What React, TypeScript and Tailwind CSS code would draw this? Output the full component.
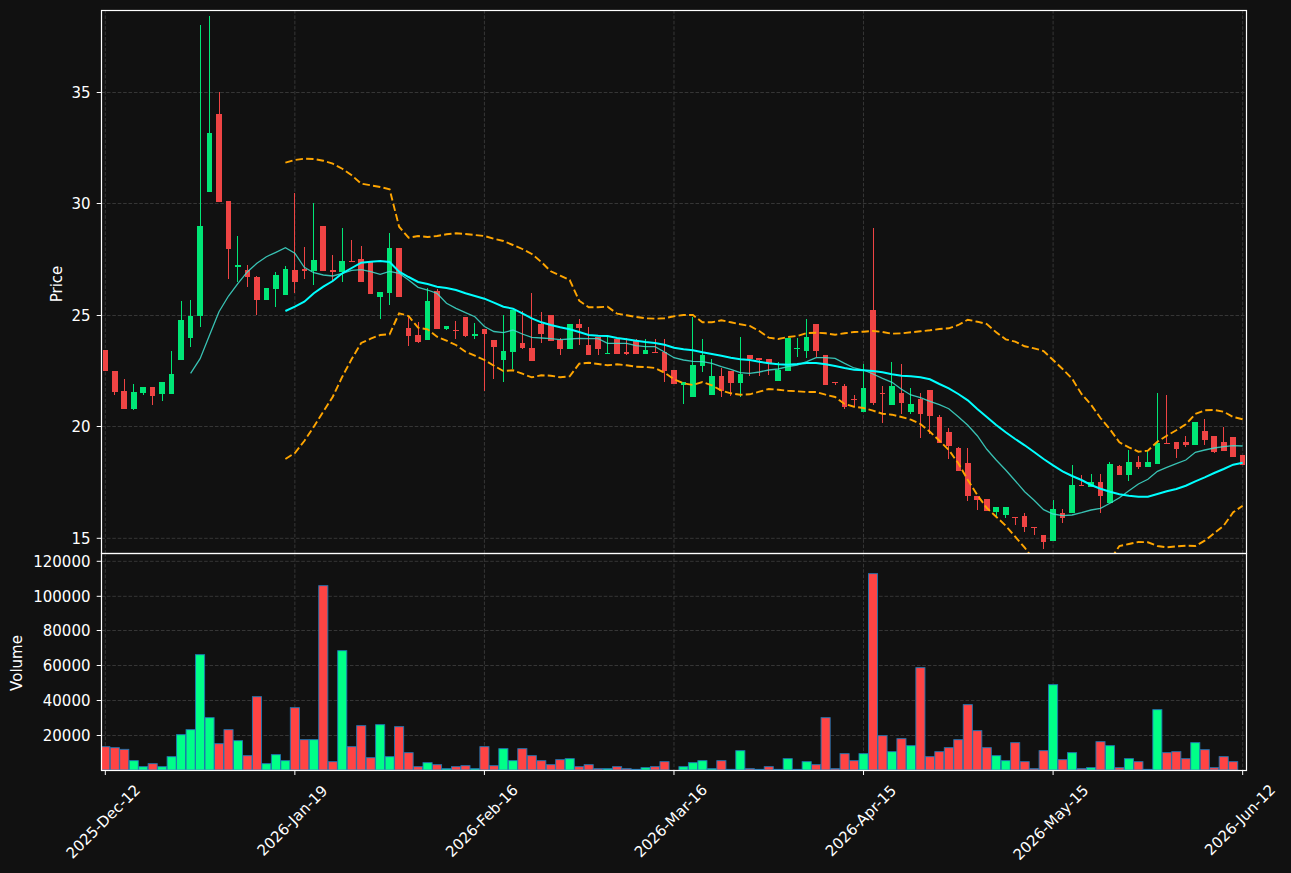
const X = (i: number) => 105.3 + 9.478 * i;

type Candle = [number, number, number, number?, number?];
// [green?, bodyTop, bodyBottom, wickTop, wickBottom] in chart pixels
const candles: Candle[] = [
  [0,350,371],[0,371,392,371,394.7],[0,391,409,379,409],[1,392,409,384.3,409.7],[1,387,393,387,395],
  [0,387,396,387,404.7],[1,382,394,382,400.7],[1,374,394,351,394],[1,320,360,301,360],[1,316,338,300.3,346.7],
  [1,226,316,25,326.7],[1,133,192,16.3,192],[0,114,202,92.3,202],[0,201,249,201,279.3],[1,265,267,236.3,281.7],
  [0,270,277,265.3,286.7],[0,277,300,276,315.3],[1,288,300],[1,275,289,272,307.3],[1,269,295,266.3,295],
  [0,270,282,193.3,293],[0,269,271,247.3,279.3],[1,260,271,203.3,285.3],[0,226,271],[0,270,272,255.3,282],
  [1,261,272,228.3,281.7],[0,261,262,240.3,262],[0,259,282,246.3,282],[0,262,294],[1,292,297,292,319.3],
  [1,248,293,233.3,305.3],[0,248,297],[0,328,336,316,346],[0,335,342,322,343],[1,301,340,288,340],
  [0,291,329,289,329],[1,326,329,326,330],[0,330,331,321.3,339.3],[0,317,336,317,337],[1,334,336,323,339],
  [0,329,334,329,391],[0,340,347,340,379.3],[1,351,360,315.3,381.7],[1,310,352,310,368.7],[0,343,348,310.7,349],
  [0,348,361,293.3,361],[0,324,334,312.3,343],[0,315,341],[0,340,349,337.7,355],[1,324,349],
  [0,324,328,319,345],[0,345,355,327.3,355],[0,337,349,337,355],[1,353,354,337,354],[0,339,354],
  [0,352,354,338,355],[0,341,354,339.3,354],[1,350,354,339,354],[0,352,353,339,353],[0,352,371,339,381.7],
  [0,370,384],[1,382,385,382,403.7],[1,365,397,317.3,397],[1,355,366,339,372],[1,376,395,359,395],
  [0,376,391,368.3,397],[0,371,383,371,396],[1,374,383,337,397],[0,355,359,355,376],[0,358,360,358,376],
  [0,359,363,359,375],[1,370,381,362,381],[1,338,371],[1,348,349,338,357],[1,337,351,319,358],
  [0,324,351,324,357],[0,355,385],[0,382,383,382,385],[0,386,407,384,408.7],[0,399,400,395,407],
  [1,388,412,364.3,412],[0,310,403,228,405],[0,393,394,386.3,423],[1,386,405,362.3,405],[0,393,403,364.3,414],
  [1,404,412,388.3,413.7],[0,399,414,393,437.7],[0,390,416,390,434],[0,417,443,415,443],[0,432,446,428,459],
  [0,448,471,447,471],[0,463,496,448,500.7],[0,496,500,496,509.7],[0,499,511],[1,507,512,507,516],
  [1,507,515,507,518],[0,517,518,517,525],[0,516,527,513,532],[0,527,528,527,535],[0,535,542,535,549],
  [1,509,541,500,541],[0,513,518,509,523],[1,485,513,465,513],[0,485,486,475,486],[1,482,487,474,487],
  [0,482,496,474,513],[1,464,503,462,503],[0,466,475,465,475],[1,462,475,450,481],[0,462,467,456,469],
  [1,462,467,451,467],[1,443,464,393.3,464],[0,443,444,395,444],[0,442,449,442,458],[0,442,445,436,447],
  [1,422,445],[0,431,440,419,445],[0,436,452,436,453],[0,442,451,427,451],[0,437,457],[0,455,465],
];

const volumeZ = [
  590,593,598,632,650,641,650,620,554,539,314,503,581,539,572,617,440,641,614,632,473,569,569,107,635,302,590,527,623,524,
  620,530,608,650,638,644,656,650,647,656,590,647,596,632,596,617,632,644,629,626,650,644,656,656,650,656,658,653,650,635,
  660,650,638,632,656,632,658,602,656,658,650,658,626,658,635,644,503,656,611,632,611,71,557,605,566,587,353,620,605,593,
  569,464,542,593,617,632,578,635,656,602,404,629,608,656,653,575,587,653,626,635,658,479,608,605,626,578,599,653,620,635,
];

const maSlow = [
  311,306.7,301.7,293.3,286.7,281,273.3,268,262.7,261.7,261,262,271.7,277,282,284,286.7,288,290,293.3,296,298.7,302.7,
  306.7,308.7,313.3,318.3,322.3,325,327.3,329.3,332,335,335.7,336,338,339.3,340.7,342,343,344.7,347.7,349.3,350.3,352.3,
  354,355.7,357.7,359.3,360,361.7,363.3,364.3,364.7,364,363,363,364.3,366,368,369.7,370.3,371,372.3,374.3,375.7,376.3,
  377.3,379.3,384,388.3,394,400.3,409,417,425,432.3,439,445.3,452,459,465.3,471.3,476,480,485,488.7,491.7,494.3,495.7,
  496.7,496.7,494,491.3,489,485.7,481.3,477.3,473,469,464.7,462.7,
];
const maFast = [
  373.3,358.7,335,311.7,296,283.3,271.7,263.3,256.7,252.3,247.7,253.3,267.3,272.7,275,276,273.3,270.3,269.7,271.7,274.3,
  271.3,273.3,280,287.3,290,293.3,303.3,308.3,312.7,316.7,326.5,331.5,332.7,330,334,337.3,338,338.7,339.7,339,338.3,
  338.7,338.7,343.3,343.3,343.3,345.7,346.7,346.7,352,357.7,360,361.3,361.7,363.3,366.7,369.3,372.7,373.3,372,370,369,
  366.7,365,361.7,357.7,357.7,358.3,363.3,368,370,374,378.3,382.3,389.3,395,397.7,401.3,404.7,408.7,416.7,425.3,435.7,
  449.3,460,470,480.7,491.7,500.3,509.7,514,515.7,515,512.7,510,508.3,503.3,497.7,490.7,484,479.3,471.3,467.3,463.7,
  460,452.3,450,448,446.7,445.7,446,
];
const upper = [
  162.7,160,158.7,159,160.7,163.7,168.7,175.3,183.7,185.3,187,189.3,226.7,237.7,236,237,236,234.3,233.3,234,235,236,238.7,
  241,245,249,254,262,271.3,275.7,280,300.7,307.3,307.3,306.7,313.7,315.3,317,318.3,318.7,318.3,316.3,315,315,322.3,322.3,
  320.3,322.3,324.3,326,331,337.7,339,337,336,333,332.7,333.3,334.7,333.3,332,331.7,331,332,333.7,333.3,332.3,331.3,330.3,
  329,328.3,325,319.7,321.7,324,332.3,339.3,341.7,346.3,348.3,351,360,369,378.7,394,404.7,418,429.3,442.3,447.3,451.7,450.7,
  441.7,435.7,430.3,424.3,414,410.3,410,411.7,417,419.3,
];
const lower = [
  459,453,441,426.7,411.7,396.7,376.7,359,343,338.7,335,334.3,313.3,316,327.7,329.3,336.7,340.7,345,351.7,355.7,360,365.7,
  371,370.3,373.7,377.3,375.3,375.7,377.3,376.3,363.7,362.7,364,365.3,364.3,365.3,366.7,367,368,372.7,379.3,383.3,385,382,
  385.3,390.7,393.3,394.7,394.3,391.7,389,389.7,390.7,391.3,392,392,394.7,397,404,406.7,408,410.7,413.7,414.7,417,419.7,
  424,431.7,440.7,450,463.3,480,495,508,516.7,525.7,536.7,547.7,560,570,578,585,590,592,590,580,560,546,544,542,542.3,546,
  547.3,546.3,545.7,546,540.7,533.3,525.7,512.3,505.7,
];

const poly = (vals: number[], start: number) => vals.map((y, i) => `${X(start + i).toFixed(1)},${y}`).join(" ");
const xTicks = [0, 20, 40, 60, 80, 100, 120];
const xLabels: [string, number, number][] = [
  ["2025-Dec-12", 103.3, 821.7],
  ["2026-Jan-19", 292.5, 820.8],
  ["2026-Feb-16", 482, 821],
  ["2026-Mar-16", 671, 821],
  ["2026-Apr-15", 861, 820.8],
  ["2026-May-15", 1051, 822.6],
  ["2026-Jun-12", 1240, 820],
];
const priceTicks: [string, number][] = [["35", 92.5], ["30", 203.5], ["25", 315.5], ["20", 426.5], ["15", 538.3]];
const volTicks: [string, number][] = [["120000", 561.3], ["100000", 596.3], ["80000", 630.5], ["60000", 665.5], ["40000", 700.5], ["20000", 735.5]];

const GRID = "#363636";
const DASH = "3.6 1.8";

function Frame({ x0, w, ticks }: { x0: number; w: number; ticks: [string, number][] }) {
  return (
    <>
      {ticks.map(([t, y]) => (
        <g key={t}>
          <line x1={x0} x2={x0 + w} y1={y} y2={y} stroke={GRID} strokeWidth={1} strokeDasharray={DASH} />
          <line x1={x0 - 4.8} x2={x0} y1={y} y2={y} stroke="#fff" strokeWidth={1} />
          <text x={x0 - 11} y={y + 5.3} textAnchor="end" fill="#fff" className="text-[15px]">{t}</text>
        </g>
      ))}
    </>
  );
}

export default function App() {
  return (
    <div className="w-[1291px] h-[873px] bg-[#111111] pt-[10px] pl-[101px] overflow-hidden font-['DejaVu_Sans',sans-serif]">
      <div className="flex flex-col w-[1146px]">
        <svg viewBox="101 10 1146 543" className="block w-[1146px] h-[543px] overflow-visible">
          <defs>
            <clipPath id="priceClip"><rect x={101.5} y={10.5} width={1145} height={543} /></clipPath>
          </defs>
          <Frame x0={101.5} w={1145} ticks={priceTicks} />
          {xTicks.map((i) => (
            <line key={i} x1={X(i)} x2={X(i)} y1={10} y2={553} stroke={GRID} strokeWidth={1} strokeDasharray={DASH} />
          ))}
          <g clipPath="url(#priceClip)">
            {candles.map(([g, bt, bb, wt, wb], i) => {
              const c = g ? "#00e676" : "#ef4444";
              const x = X(i);
              return (
                <g key={i} shapeRendering="crispEdges">
                  {wt !== undefined && <rect x={x - 0.5} y={wt} width={1} height={(wb ?? bb) - wt} fill={c} />}
                  <rect x={x - 2.8} y={bt} width={5.6} height={bb - bt} fill={c} />
                </g>
              );
            })}
            <polyline points={poly(upper, 19)} fill="none" stroke="#ffa500" strokeWidth={1.9} strokeDasharray="7.4 3.2" />
            <polyline points={poly(lower, 19)} fill="none" stroke="#ffa500" strokeWidth={1.9} strokeDasharray="7.4 3.2" />
            <polyline points={poly(maFast, 9)} fill="none" stroke="#40e0d0" strokeOpacity={0.85} strokeWidth={1.3} />
            <polyline points={poly(maSlow, 19)} fill="none" stroke="#00ffff" strokeWidth={2} />
          </g>
          <rect x={101.5} y={10.5} width={1145} height={543} fill="none" stroke="#fff" strokeWidth={1.2} />
          <text transform="translate(62 284) rotate(-90)" textAnchor="middle" fill="#fff" className="text-[15px]">Price</text>
        </svg>

        <svg viewBox="101 553 1146 217" className="block w-[1146px] h-[217px] overflow-visible">
          <defs>
            <clipPath id="volClip"><rect x={101.5} y={553.5} width={1145} height={217} /></clipPath>
          </defs>
          <Frame x0={101.5} w={1145} ticks={volTicks} />
          {xTicks.map((i) => (
            <g key={i}>
              <line x1={X(i)} x2={X(i)} y1={553} y2={770} stroke={GRID} strokeWidth={1} strokeDasharray={DASH} />
              <line x1={X(i)} x2={X(i)} y1={770} y2={775} stroke="#fff" strokeWidth={1} />
            </g>
          ))}
          <g clipPath="url(#volClip)">
            {volumeZ.map((z, i) => {
              const y = 550 + z / 3;
              if (z >= 660) return null;
              return (
                <rect
                  key={i}
                  x={X(i) - 4.55}
                  y={y}
                  width={9.1}
                  height={770 - y}
                  fill={candles[i][0] ? "#00ff88" : "#ff4444"}
                  stroke="#1f77b4"
                  strokeWidth={0.9}
                />
              );
            })}
          </g>
          <rect x={101.5} y={553.5} width={1145} height={217} fill="none" stroke="#fff" strokeWidth={1.2} />
          <text transform="translate(22 663) rotate(-90)" textAnchor="middle" fill="#fff" className="text-[15px]">Volume</text>
          {xLabels.map(([t, x, y]) => (
            <text key={t} transform={`translate(${x} ${y}) rotate(-45)`} textAnchor="middle" y={5} fill="#fff" className="text-[15px]">{t}</text>
          ))}
        </svg>
      </div>
    </div>
  );
}
